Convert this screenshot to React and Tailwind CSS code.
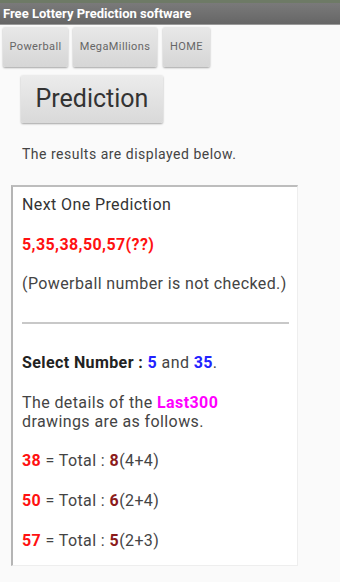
export default function App() {
  const font = { fontFamily: "Roboto, 'Liberation Sans', sans-serif" };
  return (
    <div className="w-[340px] h-[582px] bg-[#fafafa] overflow-hidden font-[Roboto,'Liberation_Sans',sans-serif]">
      <div className="h-[3px] bg-[#6e7a66]" />
      <div className="h-[22px] bg-gradient-to-b from-[#7a7a7a] to-[#666666] border-b border-[#9a9a9a] flex items-center px-[3px]">
        <span className="text-white font-bold text-[13px] leading-none">Free Lottery Prediction software</span>
      </div>

      <div className="flex gap-[5px] pl-[3px] pt-[2px]">
        {["Powerball", "MegaMillions", "HOME"].map((b, i) => (
          <button
            key={b}
            className={`h-[40px] ${i === 0 ? "w-[65px]" : i === 1 ? "w-[84px] ml-[0px]" : "w-[47px] ml-[1px]"} rounded-[2px] bg-gradient-to-b from-[#e8e8e8] to-[#d6d6d6] shadow-[0_1px_2px_rgba(0,0,0,0.35)] text-[11px] tracking-[0.4px] text-[#666]`}
          >
            {b}
          </button>
        ))}
      </div>

      <div className="pl-[21px] pt-[8px]">
        <button className="w-[142px] h-[48px] rounded-[2px] bg-gradient-to-b from-[#ececec] to-[#d9d9d9] shadow-[0_1px_2px_rgba(0,0,0,0.35)] text-[25px] text-[#333]">
          Prediction
        </button>
      </div>

      <p className="pl-[22px] pt-[23px] text-[14px] tracking-[0.5px] text-[#444] leading-[16px]">The results are displayed below.</p>

      <div style={font} className="ml-[11px] mt-[23px] w-[287px] h-[381px] bg-white border-l-2 border-t-2 border-l-[#b5b5b5] border-t-[#bdbdbd] border-r border-b border-r-[#eeeeee] border-b-[#eeeeee] pl-[9px] pr-[8px] pt-[8px] text-[16px] tracking-[0.4px] leading-[19px] text-[#333]">
        <p>Next One Prediction</p>
        <p className="mt-[21px] font-bold text-[#ff1111]">5,35,38,50,57(??)</p>
        <p className="mt-[20px] text-[#444]">(Powerball number is not checked.)</p>
        <div className="mt-[29px] h-[2px] bg-[#c8c8c8] w-[267px]" />
        <p className="mt-[29px] font-bold text-[#222]">
          Select Number : <span className="text-[#2222ff]">5</span>
          <span className="font-normal text-[#444]"> and </span>
          <span className="text-[#2222ff]">35</span>
          <span className="font-normal text-[#444]">.</span>
        </p>
        <p className="mt-[21px] text-[#444]">
          The details of the <span className="font-bold text-[#ff00ff]">Last300</span>
          <br />
          drawings are as follows.
        </p>
        {[
          ["38", "8", "(4+4)"],
          ["50", "6", "(2+4)"],
          ["57", "5", "(2+3)"],
        ].map(([n, t, d], i) => (
          <p key={n} className={`${i === 0 ? "mt-[20px]" : "mt-[21px]"} text-[#444]`}>
            <span className="font-bold text-[#ff1111]">{n}</span> = Total :{" "}
            <span className="font-bold text-[#8b1a1a]">{t}</span>
            {d}
          </p>
        ))}
      </div>
    </div>
  );
}
